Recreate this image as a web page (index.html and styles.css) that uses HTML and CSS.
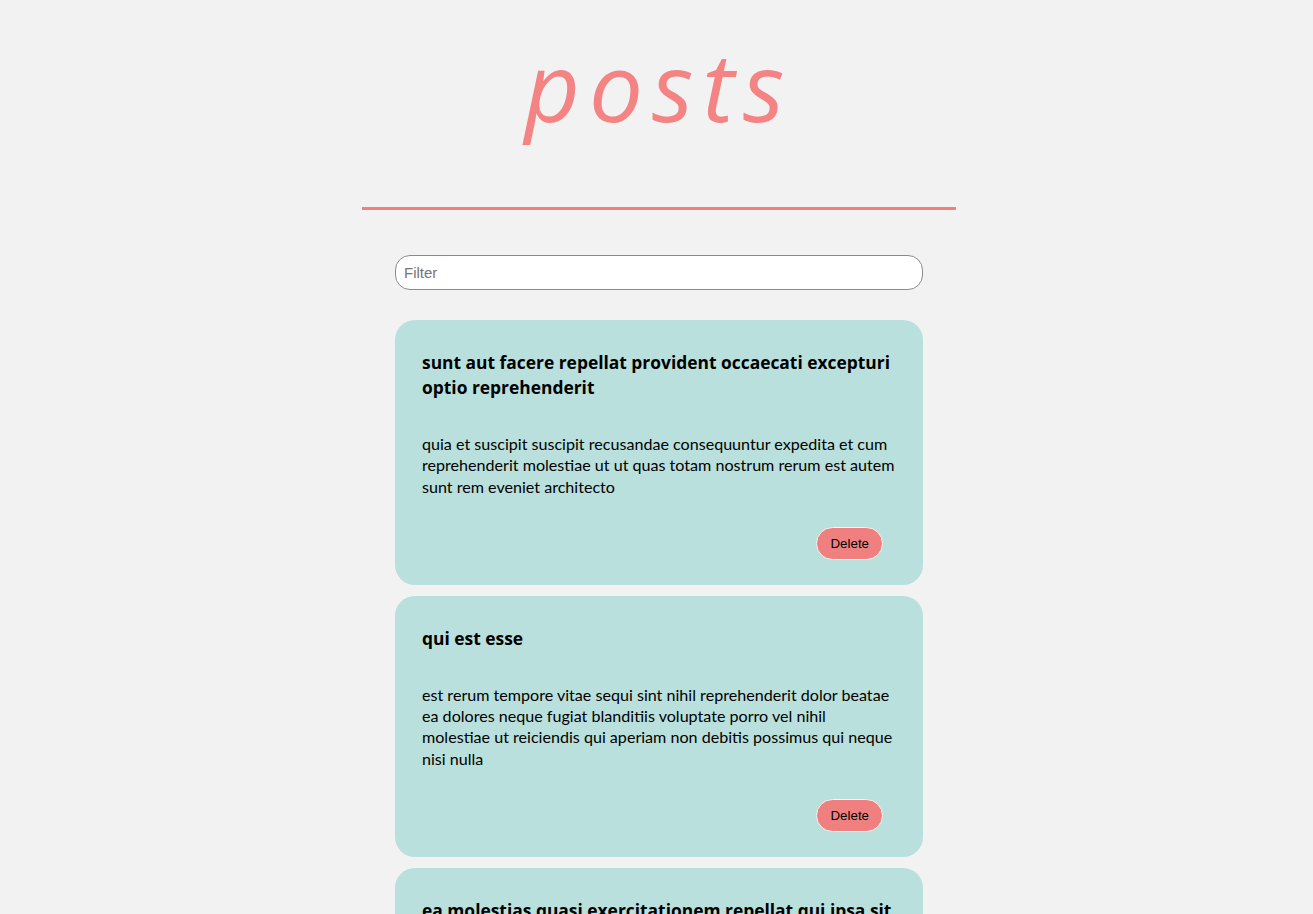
FILE: index.html
```html
<!DOCTYPE html>
<html lang="en">
  <head>
    <meta charset="UTF-8" />
    <title>posts</title>
    <link rel="stylesheet" href="styles.css">
  </head>
  <body>
    <header class="page-header">
      <h1 class="page-title">posts</h1>
      <hr class="divider" />
    </header>

    <main class="posts">
      <input type="text" class="filter" placeholder="Filter" />

      <article class="post">
        <h3 class="post-title">sunt aut facere repellat provident occaecati excepturi optio reprehenderit</h3>
        <p class="post-body">quia et suscipit suscipit recusandae consequuntur expedita et cum reprehenderit molestiae ut ut quas totam nostrum rerum est autem sunt rem eveniet architecto</p>
        <div class="post-actions">
          <button class="delete-btn">Delete</button>
        </div>
      </article>

      <article class="post">
        <h3 class="post-title">qui est esse</h3>
        <p class="post-body">est rerum tempore vitae sequi sint nihil reprehenderit dolor beatae ea dolores neque fugiat blanditiis voluptate porro vel nihil molestiae ut reiciendis qui aperiam non debitis possimus qui neque nisi nulla</p>
        <div class="post-actions">
          <button class="delete-btn">Delete</button>
        </div>
      </article>

      <article class="post">
        <h3 class="post-title">ea molestias quasi exercitationem repellat qui ipsa sit aut</h3>
        <p class="post-body">et iusto sed quo iure voluptatem occaecati omnis eligendi aut ad voluptatem doloribus vel accusantium quis pariatur molestiae porro eius odio et labore et velit aut</p>
        <div class="post-actions">
          <button class="delete-btn">Delete</button>
        </div>
      </article>
    </main>
  </body>
</html>
```

FILE: styles.css
```css
body {
  margin: 0;
  background-color: #f2f2f2;
  font-family: Lato, "Open Sans", sans-serif;
  color: #000;
}

.page-header {
  display: flex;
  flex-direction: column;
  align-items: center;
  padding-left: 5px;
}
.page-title {
  margin: 20px 0 0;
  font-family: "Open Sans", sans-serif;
  font-size: 96px;
  font-style: italic;
  font-weight: 400;
  line-height: 130px;
  letter-spacing: 9px;
  color: #f48383;
}
.divider {
  width: 594px;
  margin: 57px 0 0;
  border: none;
  height: 3px;
  background-color: #f08080;
}

.posts {
  width: 528px;
  margin: 0 auto;
  padding: 45px 0 0 5px;
  display: flex;
  flex-direction: column;
  gap: 11px;
}

.filter {
  box-sizing: border-box;
  width: 528px;
  height: 35px;
  margin-bottom: 19px;
  padding: 0 8px;
  border: 1px solid #8a8a8a;
  border-radius: 15px;
  background: #fff;
  font-family: "Liberation Sans", Arial, sans-serif;
  font-size: 15px;
}
.filter::placeholder {
  color: #757575;
}

.post {
  background-color: #b9e0dc;
  border-radius: 20px;
  padding: 30px 26px 25px 27px;
}
.post-title {
  margin: 0;
  font-family: "Open Sans", sans-serif;
  font-size: 17.4px;
  font-weight: 700;
  line-height: 25px;
}
.post-body {
  margin: 33px 0 0;
  font-size: 16.1px;
  line-height: 21.3px;
}
.post-actions {
  display: flex;
  justify-content: flex-end;
  margin-top: 30px;
  padding-right: 14px;
}
.delete-btn {
  height: 33px;
  padding: 0 13px;
  border: 1px solid #f4f4f4;
  border-radius: 17px;
  background-color: #f08080;
  font-family: "Liberation Sans", Arial, sans-serif;
  font-size: 13.33px;
  color: #000;
}
```
